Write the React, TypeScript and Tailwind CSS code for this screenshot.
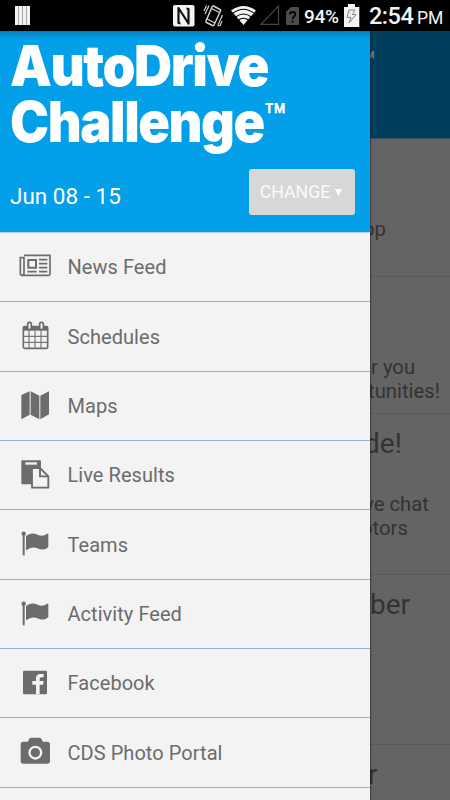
import type { ReactNode } from "react";

const NewsIcon = () => (
    <g fill="none" stroke="#6c6c6c" strokeWidth="5">
        <path d="M27 28H105V84Q105 88 101 88H21Q16 88 16 82V35H27V80Q27 87 21 87" />
        <path d="M40 42H63V65H40Z" strokeWidth="6" />
        <path d="M72 41H97M72 53H97M72 65H97M72 77H97M37 77H65" />
    </g>
);

const CalendarIcon = () => (
    <>
        <rect x="25" y="35" width="73" height="65" rx="4" fill="#f3f3f3" stroke="#6c6c6c" strokeWidth="5" />
        <path d="M25 33H98V47H25Z" fill="#6c6c6c" />
        <path d="M42 47V100M60 47V100M78 47V100M25 64H98M25 82H98" stroke="#777" strokeWidth="3.500" />
        <rect x="38" y="22" width="11" height="22" rx="5" fill="#f3f3f3" stroke="#6c6c6c" strokeWidth="5" />
        <rect x="74" y="22" width="11" height="22" rx="5" fill="#f3f3f3" stroke="#6c6c6c" strokeWidth="5" />
    </>
);

const MapIcon = () => (
    <path
        fill="#6c6c6c"
        d="M19 30L44 19V89L19 103ZM47 19L73 32V103L47 89ZM76 32L102 19V88L76 103Z"
    />
);

const ResultsIcon = () => (
    <>
        <rect x="19" y="19" width="59" height="72" rx="3" fill="#6c6c6c" />
        <path d="M31 25H66V32H31Z" fill="#f3f3f3" />
        <path d="M51 42H75L100 67V101H51Z" fill="#f3f3f3" stroke="#6c6c6c" strokeWidth="5.500" strokeLinejoin="round" />
        <path d="M75 41V67H100" fill="none" stroke="#6c6c6c" strokeWidth="5.500" />
    </>
);

const FlagIcon = () => (
    <>
        <circle cx="26" cy="32" r="6.500" fill="#6c6c6c" />
        <path d="M23 34H29V97H23Z" fill="#6c6c6c" />
        <path
            fill="#6c6c6c"
            d="M33 39C44 30 55 29 68 35C80 41 88 37 97 32Q100 31 100 34V72C90 81 80 82 67 76C56 71 45 74 33 82Z"
        />
    </>
);

const FacebookIcon = () => (
    <>
        <rect x="24" y="26" width="72" height="71" rx="3" fill="#6c6c6c" />
        <path
            fill="#f3f3f3"
            d="M63 97V68H52V57H63V50C63 40 69 36 77 36H86V46H80C76 46 74 48 74 52V57H86L84 68H74V97Z"
        />
    </>
);

const CameraIcon = () => (
    <>
        <path
            fill="#6c6c6c"
            d="M25 32H38L43 23Q45 20 49 20H73Q77 20 79 23L84 32H97Q105 32 105 40V90Q105 98 97 98H25Q17 98 17 90V40Q17 32 25 32Z"
        />
        <circle cx="61" cy="65" r="17.500" fill="none" stroke="#f3f3f3" strokeWidth="7" />
    </>
);

const menu: { label: string; icon: () => ReactNode }[] = [
    { label: "News Feed", icon: NewsIcon },
    { label: "Schedules", icon: CalendarIcon },
    { label: "Maps", icon: MapIcon },
    { label: "Live Results", icon: ResultsIcon },
    { label: "Teams", icon: FlagIcon },
    { label: "Activity Feed", icon: FlagIcon },
    { label: "Facebook", icon: FacebookIcon },
    { label: "CDS Photo Portal", icon: CameraIcon },
];

function StatusBar() {
    return (
        <div className="flex h-[31px] shrink-0 bg-black text-[#f3f3f3]">
            <svg className="ml-[15px] mt-1.5 h-[19px] w-[15px]" viewBox="0 0 15 19">
                <path d="M0 0H15V19H0Z" fill="#f3f3f3" />
                <path d="M3.500 0V19M7.500 0V19M11.500 0V19" stroke="#a8a8a8" />
            </svg>
            {/* NFC */}
            <svg className="ml-[143px] mt-[5px] h-[22px] w-[22px]" viewBox="0 0 22 22">
                <rect width="21.500" height="21.500" rx="2" fill="#f3f3f3" />
                <path
                    d="M7.500 18.500L5.500 18V3L15.500 18.500V4L13.500 3.500"
                    fill="none"
                    stroke="#111"
                    strokeWidth="2.200"
                    strokeLinejoin="round"
                />
            </svg>
            {/* Vibrate */}
            <svg className="ml-2 mt-1 h-6 w-[22px]" viewBox="0 0 22 24" fill="none" stroke="#cfcfcf">
                <path d="M10.500 2L17 5.500Q18 6 17.500 7L11 21Q10.500 22 9.500 21.500L3.500 18.500Q2.500 18 3 17L9 3Q9.500 1.500 10.500 2Z" strokeWidth="1.500" />
                <path d="M8.500 4.500L16.500 8.500M4 15L12 19" strokeWidth="1.300" />
                <path d="M6 1.500L2 10M3.500 1.500L1 7M19.500 11L15 21M16.500 21.500L14.500 22M19 17L17 22" strokeWidth="1.200" />
            </svg>
            {/* Wi-Fi */}
            <svg className="ml-[6px] mt-1.5 h-[19px] w-[25px]" viewBox="0 0 25 19">
                <path d="M0 4.500Q12.500 -4.500 25 4.500L12.500 19Z" fill="#f3f3f3" />
                <path d="M1 8Q12.500 -1.500 24 8M4 11.500Q12.500 4.500 21 11.500M7 14.500Q12.500 10 18 14.500" fill="none" stroke="#000" strokeWidth="1.100" />
            </svg>
            <svg className="ml-1 mt-[5px] h-5 w-5" viewBox="0 0 20 20">
                <path d="M18.500 1V19.300H1Z" fill="none" stroke="#444" strokeWidth="1.200" />
            </svg>
            {/* Missing SIM */}
            <svg className="ml-[6px] mt-[7px] h-[18px] w-[13px]" viewBox="0 0 13 18">
                <path d="M5 0H12Q13 0 13 1V17Q13 18 12 18H1Q0 18 0 17V5Z" fill="#4c4c4c" />
                <path d="M3.800 7.500Q4 5 6.500 5Q9.300 5 9.300 7.500C9.300 9.500 6.600 9.800 6.600 12M6.600 13.500V15.500" fill="none" stroke="#050505" strokeWidth="1.900" />
            </svg>
            <span className="ml-[5px] mt-[5px] w-[36px] whitespace-nowrap text-[19px] font-medium leading-6 tracking-[-0.3px]">94%</span>
            {/* Charging battery */}
            <svg className="ml-1 mt-1 h-[23px] w-4" viewBox="0 0 16 23">
                <path d="M4 0H11V3H15.300V23H0V3H4Z" fill="#f3f3f3" />
                <path d="M5 6H11L8.500 10.500H12L5 19L7 13.500H3Z" fill="#ececec" stroke="#888" strokeWidth="1" />
            </svg>
            <span className="ml-[9px] mt-[2px] w-[48px] whitespace-nowrap text-[23.500px] font-medium leading-7 tracking-[-0.5px]">2:54</span>
            <span className="mt-[6px] text-[17.500px] leading-6">PM</span>
        </div>
    );
}

function DimmedFeed() {
    return (
        <div className="relative w-20 shrink-0 overflow-hidden whitespace-nowrap bg-[#646464] text-[20.300px] leading-6 text-[#333]">
            <div className="h-[108px] border-b border-[#35516a] bg-[#003f5c] pt-[18px]">
                <div className="-ml-[11px] font-['Inter'] text-[25px] font-bold leading-6 text-[#777]">™</div>
            </div>
            <div className="h-[138px] border-b border-[#5a5a5a] pt-[78px]">
                <div className="-ml-[7px]">op</div>
            </div>
            <div className="h-[137px] border-b border-[#5a5a5a] pt-[78px]">
                <div className="ml-px">r you</div>
                <div className="-ml-[2px]">tunities!</div>
            </div>
            <div className="h-[161px] border-b border-[#5a5a5a] pt-[14px]">
                <div className="-ml-[6px] text-[28px] leading-8">de!</div>
                <div className="-ml-[6px] mt-[32px]">ve chat</div>
                <div className="-ml-[9px]">otors</div>
            </div>
            <div className="h-[170px] border-b border-[#5a5a5a] pt-[14px]">
                <div className="text-[28px] leading-8">ber</div>
            </div>
            <div className="-ml-[2px] pt-[14px] text-[28px] leading-8">r</div>
            {/* Shadow cast by the drawer */}
            <div className="absolute inset-y-0 left-0 w-[2px] bg-gradient-to-r from-black/40 to-transparent" />
        </div>
    );
}

export default function App() {
    return (
        <div className="flex h-[800px] w-[450px] flex-col overflow-hidden bg-black font-['Roboto',sans-serif]">
            <StatusBar />
            <div className="flex min-h-0 flex-1">
                <aside className="w-[370px] shrink-0 overflow-hidden bg-[#f3f3f3]">
                    <header className="h-[202px] border-b border-[#b9cfe8] bg-[#039fe9] bg-gradient-to-b from-black/20 to-transparent to-[4%] pl-[10px] text-white">
                        <h1 className="h-[138px] whitespace-nowrap pt-[7px] font-['Inter'] text-[56px] font-black leading-[56px]">
                            <span className="block origin-left scale-x-[0.942] tracking-[-1.500px]">AutoDrive</span>
                            <span className="flex origin-left scale-x-[0.934] tracking-[-1.500px]">
                                Challenge
                                <span className="text-[37px] font-bold leading-[46px] tracking-normal">™</span>
                            </span>
                        </h1>
                        <div className="flex justify-between pr-[15px]">
                            <span className="mt-[13px] text-[22.500px] leading-7">Jun 08 - 15</span>
                            <button className="flex h-[46px] w-[106px] items-center justify-center gap-[5px] rounded-[3px] bg-[#d6d8d7] pr-0.5 text-[17.700px] text-[#fafafa]">
                                CHANGE
                                <svg className="h-2 w-[7px]" viewBox="0 0 7 8">
                                    <path d="M0 1H7L3.500 8Z" fill="#fff" />
                                </svg>
                            </button>
                        </div>
                    </header>
                    <nav>
                        {menu.map((item) => (
                            <div key={item.label} className="flex h-[69.35px] border-b border-[#8db5dc]">
                                <svg className="ml-[15px] mt-[13px] h-10 w-10 shrink-0" viewBox="0 0 120 120">
                                    <item.icon />
                                </svg>
                                <span className="ml-[12.500px] mt-[20.200px] whitespace-nowrap text-[20px] leading-7 tracking-[0.05px] text-[#6c6c6c]">
                                    {item.label}
                                </span>
                            </div>
                        ))}
                    </nav>
                </aside>
                <DimmedFeed />
            </div>
        </div>
    );
}
